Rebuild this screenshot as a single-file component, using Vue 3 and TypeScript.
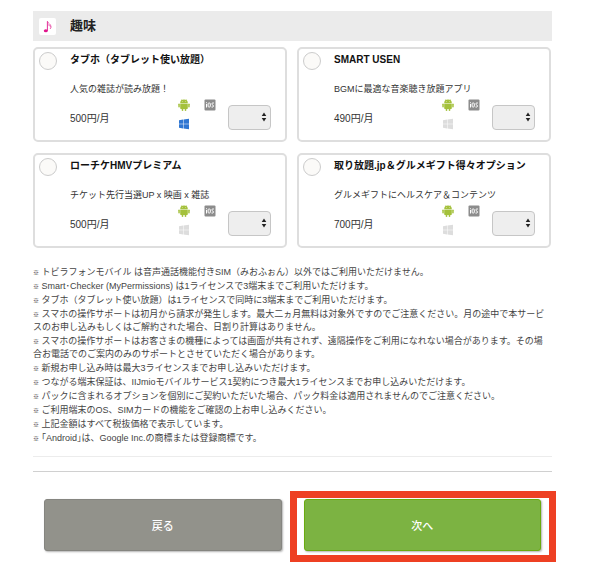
<script setup lang="ts">
import { ref } from 'vue'

interface Plan {
  id: string
  title: string
  description: string
  price: string
  windows: boolean
}

const plans: Plan[] = [
  { id: 'tabuho', title: 'タブホ（タブレット使い放題）', description: '人気の雑誌が読み放題！', price: '500円/月', windows: true },
  { id: 'usen', title: 'SMART USEN', description: 'BGMに最適な音楽聴き放題アプリ', price: '490円/月', windows: false },
  { id: 'hmv', title: 'ローチケHMVプレミアム', description: 'チケット先行当選UP x 映画 x 雑誌', price: '500円/月', windows: false },
  { id: 'torihodai', title: '取り放題.jp＆グルメギフト得々オプション', description: 'グルメギフトにヘルスケア＆コンテンツ', price: '700円/月', windows: false },
]

const notes: string[] = [
  'トビラフォンモバイル は音声通話機能付きSIM（みおふぉん）以外ではご利用いただけません。',
  'Smart･Checker (MyPermissions) は1ライセンスで3端末までご利用いただけます。',
  'タブホ（タブレット使い放題）は1ライセンスで同時に3端末までご利用いただけます。',
  'スマホの操作サポートは初月から請求が発生します。最大二ヵ月無料は対象外ですのでご注意ください。月の途中で本サービスのお申し込みもしくはご解約された場合、日割り計算はありません。',
  'スマホの操作サポートはお客さまの機種によっては画面が共有されず、遠隔操作をご利用になれない場合があります。その場合お電話でのご案内のみのサポートとさせていただく場合があります。',
  '新規お申し込み時は最大3ライセンスまでお申し込みいただけます。',
  'つながる端末保証は、IIJmioモバイルサービス1契約につき最大1ライセンスまでお申し込みいただけます。',
  'パックに含まれるオプションを個別にご契約いただいた場合、パック料金は適用されませんのでご注意ください。',
  'ご利用端末のOS、SIMカードの機能をご確認の上お申し込みください。',
  '上記金額はすべて税抜価格で表示しています。',
  '｢Android｣は、Google Inc.の商標または登録商標です。',
]

const selected = ref<string[]>([])
</script>

<template>
  <main class="page">
    <header class="heading">
      <svg class="heading-icon" viewBox="0 0 17 17" aria-hidden="true">
        <rect width="17" height="17" rx="2" fill="#fff" />
        <ellipse cx="6.8" cy="12.8" rx="2" ry="1.5" fill="#e0148c" />
        <path d="M8.4 12.8V3.2" stroke="#e0148c" stroke-width="0.9" fill="none" />
        <path d="M8.4 3.2c.4 2 3.6 3 3.6 5.4 0 .9-.3 1.7-.9 2.4M8.6 6.2c1.2 1.2 2.8 1.7 3.3 3" stroke="#e652a8" stroke-width="0.9" fill="none" />
      </svg>
      <h1>趣味</h1>
    </header>

    <div class="plans">
      <section v-for="plan in plans" :key="plan.id" class="card">
        <input :id="plan.id" v-model="selected" class="pick" type="checkbox" :value="plan.id" />
        <div class="body">
          <label class="title" :for="plan.id">{{ plan.title }}</label>
          <p class="description">{{ plan.description }}</p>
          <div class="detail">
            <span class="price">{{ plan.price }}</span>
            <div class="systems">
              <svg viewBox="0 0 12 12" aria-hidden="true">
                <g fill="#a4c13c">
                  <path d="M2.2 4a3.8 3.4 0 0 1 7.6 0z" />
                  <path d="M3.3.3l1 1.5M8.7.3l-1 1.5" stroke="#a4c13c" stroke-width=".5" />
                  <path d="M2.2 4.5h7.6v4.7a.7.7 0 0 1-.7.7H2.9a.7.7 0 0 1-.7-.7z" />
                  <rect x=".3" y="4.4" width="1.5" height="4.2" rx=".75" />
                  <rect x="10.2" y="4.4" width="1.5" height="4.2" rx=".75" />
                  <rect x="3.7" y="8.5" width="1.6" height="3.5" rx=".8" />
                  <rect x="6.7" y="8.5" width="1.6" height="3.5" rx=".8" />
                </g>
                <circle cx="4.3" cy="2.6" r=".4" fill="#fff" />
                <circle cx="7.7" cy="2.6" r=".4" fill="#fff" />
              </svg>
              <svg viewBox="0 0 12 12" aria-hidden="true">
                <rect x=".5" y=".5" width="11" height="11" rx="1" fill="#8c8c8c" />
                <g fill="none" stroke="#fff" stroke-width="1">
                  <path d="M2.5 5v3.5M2.5 3.3v.9" />
                  <rect x="4.1" y="4" width="2.2" height="4" rx=".8" />
                  <path d="M9.9 4H8.6q-.7 0-.7.9 0 .8.7 1.1.9.2.9 1t-.7 1H7.5" />
                </g>
              </svg>
              <svg viewBox="0 0 12 12" aria-hidden="true">
                <path
                  :class="plan.windows ? 'windows-on' : 'windows-off'"
                  d="M1 2.2l4-.6v4.1H1zM5.5 1.5L11 .7v5H5.5zM1 6.2h4v4.2l-4-.6zM5.5 6.2H11v5.1l-5.500-.8z"
                />
              </svg>
            </div>
            <div class="quantity">
              <select :aria-label="plan.title">
                <option value=""></option>
                <option value="1">1</option>
                <option value="2">2</option>
                <option value="3">3</option>
              </select>
              <svg class="arrows" viewBox="0 0 6 10" aria-hidden="true">
                <path d="M.7 4L3 .5 5.3 4zM.7 6L3 9.5 5.3 6z" fill="#222" />
              </svg>
            </div>
          </div>
        </div>
      </section>
    </div>

    <ul class="notes">
      <li v-for="note in notes" :key="note"><span class="mark">※</span> {{ note }}</li>
    </ul>

    <hr class="rule" />

    <nav class="actions">
      <button type="button" class="button back">戻る</button>
      <div class="highlight">
        <button type="button" class="button next">次へ</button>
      </div>
    </nav>
  </main>
</template>

<style>
body {
  margin: 0;
  background: #fff;
}
</style>

<style scoped>
.page {
  box-sizing: border-box;
  padding: 11px 48px 12px 33px;
  color: #333;
  font-family: "Liberation Sans", "Noto Sans CJK JP", sans-serif;
  font-size: 10px;
}

.heading {
  display: flex;
  align-items: center;
  gap: 14px;
  height: 30px;
  padding-left: 6px;
  background: #ebebeb;
}

.heading-icon {
  width: 17px;
  height: 17px;
}

h1 {
  margin: 0;
  color: #222;
  font-size: 13px;
  line-height: 20px;
}

.plans {
  display: grid;
  grid-template-columns: 1fr 1fr;
  gap: 11px 10px;
  margin-top: 6px;
  padding-right: 1px;
}

.card {
  display: flex;
  gap: 13px;
  padding: 3px 14px 10px 4px;
  border: 2px solid #dedede;
  border-radius: 5px;
}

.pick {
  appearance: none;
  box-sizing: border-box;
  flex: none;
  width: 18px;
  height: 18px;
  margin: 0;
  border: 1px solid #ccc;
  border-radius: 50%;
  background: #fbfaf8;
}

.pick:checked {
  background: #7cb342;
}

.body {
  flex: 1;
  min-width: 0;
}

.title {
  display: block;
  color: #111;
  font-weight: bold;
  line-height: 15px;
  white-space: nowrap;
}

.description {
  margin: 16px 0 2px;
  font-size: 9px;
  line-height: 13px;
}

.detail {
  display: flex;
  align-items: flex-end;
  height: 32px;
}

.price {
  flex: 1;
  line-height: 23px;
}

.systems {
  display: grid;
  grid-template-columns: 12px 12px;
  gap: 7px 14px;
  margin-right: 12px;
}

.systems svg {
  width: 12px;
  height: 12px;
}

.windows-on {
  fill: #2f76d2;
}

.windows-off {
  fill: #ddd;
}

.quantity {
  position: relative;
  width: 43px;
  height: 25px;
}

select {
  appearance: none;
  box-sizing: border-box;
  width: 100%;
  height: 100%;
  padding: 0 14px 0 6px;
  border: 1px solid #c6c6c6;
  border-radius: 4px;
  background: #eee;
  color: #333;
  font: inherit;
}

.arrows {
  position: absolute;
  top: 7px;
  right: 4px;
  width: 6px;
  height: 10px;
  pointer-events: none;
}

.notes {
  display: grid;
  gap: 1px;
  margin: 18px 0 0;
  padding: 0 0 11px;
  border-bottom: 1px solid #ececec;
  color: #444;
  font-size: 9px;
  line-height: 13px;
  list-style: none;
}

.notes li {
  padding-right: 4px;
}

.mark {
  color: #222;
  font-family: "Noto Sans CJK JP", sans-serif;
  font-size: 6px;
  font-weight: bold;
  line-height: 6px;
}

.rule {
  margin: 14px 0 0;
  border: 0;
  border-top: 1px solid #d0d0d0;
}

.actions {
  display: grid;
  grid-template-columns: 1fr 1fr;
  gap: 22px;
  margin-top: 27px;
  padding: 0 11px;
}

.highlight {
  position: relative;
}

.highlight::after {
  content: "";
  position: absolute;
  inset: -8px -15px -11px -14px;
  border: 7px solid #ee4023;
  pointer-events: none;
}

.button {
  box-sizing: border-box;
  display: block;
  width: 100%;
  height: 52px;
  border: 1px solid;
  border-radius: 3px;
  box-shadow: 1px 1px 2px rgba(0, 0, 0, 0.3);
  color: #fff;
  font-family: inherit;
  font-size: 11px;
  font-weight: 500;
}

.back {
  border-color: #858580;
  background: #92928b;
}

.next {
  border-color: #6aab10;
  background: #7cb342;
}
</style>
